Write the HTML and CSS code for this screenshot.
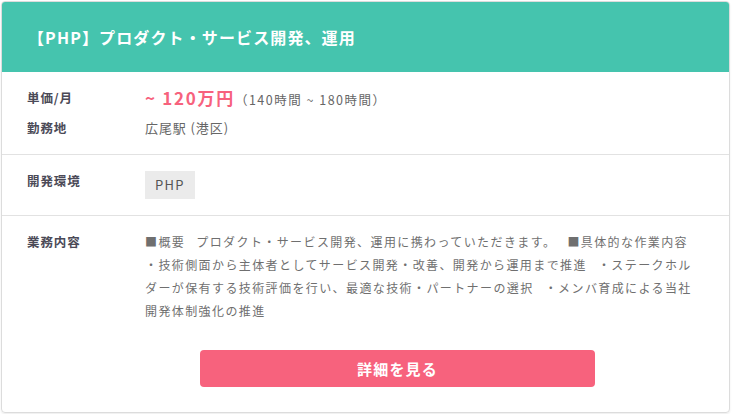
FILE: index.html
```html
<!DOCTYPE html>
<html lang="ja">
<head>
    <meta charset="UTF-8">
    <meta name="viewport" content="width=device-width, initial-scale=1.0">
    <title>案件詳細</title>
    <link rel="stylesheet" href="styles.css">
</head>
<body>
    <div class="card">
        <div class="card-header">
            <h2 class="card-title">【PHP】プロダクト・サービス開発、運用</h2>
        </div>

        <div class="section">
            <div class="row">
                <div class="label">単価/月</div>
                <div class="value"><span class="price">~ 120万円</span><span class="hours">（140時間 ~ 180時間）</span></div>
            </div>
            <div class="row">
                <div class="label">勤務地</div>
                <div class="value">広尾駅 (港区)</div>
            </div>
        </div>

        <div class="section section-env">
            <div class="row">
                <div class="label">開発環境</div>
                <div class="value"><span class="tag">PHP</span></div>
            </div>
        </div>

        <div class="section section-desc">
            <div class="row">
                <div class="label">業務内容</div>
                <div class="value desc">■概要 プロダクト・サービス開発、運用に携わっていただきます。 ■具体的な作業内容 ・技術側面から主体者としてサービス開発・改善、開発から運用まで推進 ・ステークホルダーが保有する技術評価を行い、最適な技術・パートナーの選択 ・メンバ育成による当社開発体制強化の推進</div>
            </div>
            <div class="actions">
                <a class="btn" href="#">詳細を見る</a>
            </div>
        </div>
    </div>
</body>
</html>
```

FILE: styles.css
```css
body {
    margin: 0;
    padding: 0;
    background-color: #fff;
    font-family: "Noto Sans CJK JP", "Noto Sans", sans-serif;
    color: #666;
}

.card {
    margin: 1px;
    width: 727px;
    border: 1px solid #dcdcdc;
    border-radius: 4px;
    overflow: hidden;
    box-shadow: 0 1px 2px rgba(0, 0, 0, 0.08);
}

.card-header {
    height: 70px;
    background-color: #45c4ae;
    display: flex;
    align-items: center;
    padding: 0 25px 0 26px;
}

.card-title {
    margin: 0;
    color: #fff;
    font-size: 16px;
    font-weight: 700;
    letter-spacing: 0.07em;
}

.section {
    padding: 16px 25px 16px 25px;
    border-bottom: 1px solid #e2e2e2;
    display: flex;
    flex-direction: column;
    gap: 8px;
}

.section-env {
    padding-top: 16px;
}

.section-desc {
    border-bottom: none;
    padding: 16px 25px 25px 25px;
    gap: 0;
}

.row {
    display: flex;
    align-items: flex-start;
}

.label {
    width: 118px;
    flex-shrink: 0;
    font-size: 12.5px;
    font-weight: 700;
    line-height: 20px;
    color: #4b4a57;
    letter-spacing: 0.07em;
}

.value {
    flex: 1;
    font-size: 13px;
    line-height: 20px;
    letter-spacing: 0.07em;
}

.price {
    color: #f7627d;
    font-size: 17px;
    line-height: 20px;
    font-weight: 700;
    letter-spacing: 0.1em;
}

.hours {
    font-size: 12.5px;
    color: #666;
    letter-spacing: 0.12em;
}

.tag {
    display: inline-block;
    background-color: #ebebeb;
    color: #555;
    font-size: 13px;
    line-height: 28px;
    padding: 0 10px;
    letter-spacing: 0.1em;
}

.desc {
    max-width: 556px;
    font-size: 12px;
    line-height: 23px;
    letter-spacing: 1.4px;
    word-spacing: 7px;
    color: #6f6f6f;
    margin-top: -2px;
}

.actions {
    padding: 28px 0 0 173px;
}

.btn {
    display: flex;
    align-items: center;
    justify-content: center;
    width: 395px;
    height: 37px;
    background-color: #f7627d;
    border-radius: 4px;
    color: #fff;
    font-size: 15px;
    font-weight: 700;
    letter-spacing: 0.08em;
    text-decoration: none;
}
```
